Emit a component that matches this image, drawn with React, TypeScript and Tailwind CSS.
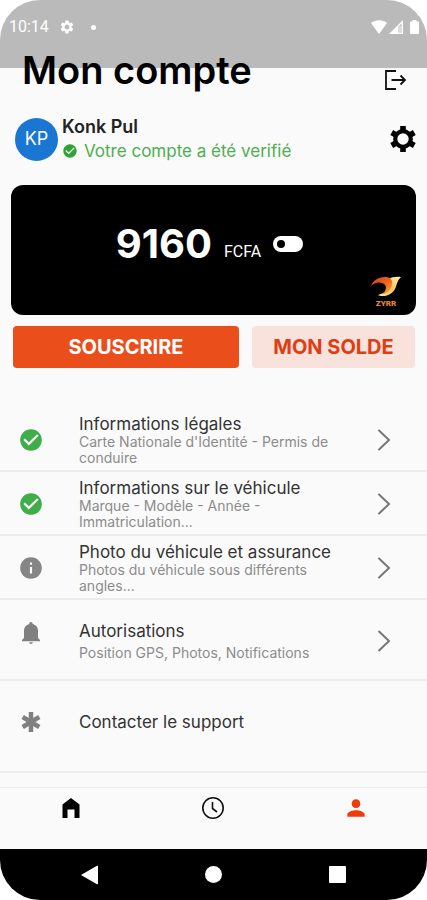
import type { ReactNode } from "react";
import { MdCheckCircle, MdInfo, MdPerson, MdSettings } from "react-icons/md";

type Item = {
  title: string;
  detail?: string;
  icon: ReactNode;
};

// rows with a two line description
const documents: Item[] = [
  {
    title: "Informations légales",
    detail: "Carte Nationale d'Identité - Permis de conduire",
    icon: <MdCheckCircle className="size-[26px] text-[#3fae49]" />,
  },
  {
    title: "Informations sur le véhicule",
    detail: "Marque - Modèle - Année - Immatriculation...",
    icon: <MdCheckCircle className="size-[26px] text-[#3fae49]" />,
  },
  {
    title: "Photo du véhicule et assurance",
    detail: "Photos du véhicule sous différents angles...",
    icon: <MdInfo className="size-[26px] text-[#858585]" />,
  },
];

function Chevron() {
  return (
    <svg viewBox="0 0 14 24" className="h-6 w-[14px] shrink-0" fill="none" stroke="#777" strokeWidth="2">
      <path d="M1.5 2 12 12 1.5 22" />
    </svg>
  );
}

function BellIcon() {
  return (
    <svg viewBox="0 0 26 26" className="mb-4 size-[26px]" fill="#808080">
      <path d="M13 2q1.700 0 1.700 1.900C18 4.700 20 7.200 20 10.500V18l2 2v1.200H4V20l2-2v-7.500C6 7.200 8 4.700 11.300 3.900 11.300 2.800 11.300 2 13 2Z" />
      <path d="M11 22.200h4q-.5 1.800-2 1.800t-2-1.800Z" />
    </svg>
  );
}

function AsteriskIcon() {
  return (
    <svg viewBox="0 0 26 26" className="size-[26px]" stroke="#808080" strokeWidth="4.500">
      <path d="M13 3v20M4.700 8l16.600 10M21.300 8 4.700 18" />
    </svg>
  );
}

function GearIcon() {
  return (
    <svg viewBox="0 0 30 30" className="size-[30px]" fill="none" stroke="#000">
      <circle cx="15" cy="15" r="7.800" strokeWidth="4.200" />
      <path
        d="M15 2v5M15 23v5M3.700 8.500l4.300 2.500M22 19l4.300 2.500M26.300 8.500 22 11M8 19l-4.300 2.500"
        strokeWidth="5.600"
      />
    </svg>
  );
}

function StatusBar() {
  return (
    <header className="flex h-[68px] items-start justify-between bg-[#bababa] pt-[17px] pr-2 pl-[9px] text-white">
      <div className="flex h-5 items-center">
        <span className="font-[Roboto] text-base leading-5">10:14</span>
        <MdSettings className="ml-[10px] size-4" />
        <span className="ml-4 size-[5px] rounded-full bg-white" />
      </div>
      <div className="flex h-5 items-center">
        <svg viewBox="0 0 16 14" className="h-[14px] w-4" fill="currentColor">
          <path d="M0 3C4.500-.8 11.500-.8 16 3L8 14Z" />
        </svg>
        <svg viewBox="0 0 15 14" className="ml-[2px] h-[14px] w-[15px]">
          <path d="M0 14 14 0v14Z" fill="#fff" />
          <path d="M9.500 6.500 12.500 3.500V12.500H9.500Z" fill="#bababa" />
          <path d="M11 6V12.500" stroke="#fff" strokeWidth="1" />
        </svg>
        <svg viewBox="0 0 9 14" className="ml-[6px] h-[14px] w-[9px]" fill="currentColor">
          <path d="M2.500 0h4v1.500H8q1 0 1 1V13q0 1-1 1H1q-1 0-1-1V2.500q0-1 1-1h1.500Z" />
        </svg>
      </div>
    </header>
  );
}

function BrandLogo() {
  return (
    <svg viewBox="0 0 32 32" className="absolute right-[14px] bottom-2 h-8 w-8" aria-label="ZYRR">
      <defs>
        <linearGradient id="wing" x1="0" y1="0" x2="1" y2="1">
          <stop offset="0" stopColor="#c63a1c" />
          <stop offset="0.55" stopColor="#f2691f" />
          <stop offset="1" stopColor="#ffb52e" />
        </linearGradient>
        <linearGradient id="tail" x1="1" y1="0" x2="0" y2="1">
          <stop offset="0" stopColor="#fff3b8" />
          <stop offset="0.5" stopColor="#f6c75a" />
          <stop offset="1" stopColor="#fff0a0" />
        </linearGradient>
      </defs>
      <path d="M31 2C25 1.500 21 2.500 19 4C24 8 20 17 8 20C12 22.500 22 21 25.500 13C27 9 27.500 5 31 2Z" fill="url(#tail)" />
      <path d="M1 11C4 3 14 0 20.500 3.500C25 8 21 17 12 20C16.500 15 17.500 10.500 13 8.500C9 6.500 4 8 1 11Z" fill="url(#wing)" />
      <text x="16" y="31" textAnchor="middle" fill="#e8852a" className="font-[Roboto] text-[8px] font-black">
        ZYRR
      </text>
    </svg>
  );
}

export default function App() {
  return (
    <div className="min-h-screen bg-white font-[Inter,sans-serif]">
      <div className="flex min-h-screen flex-col overflow-hidden rounded-[40px] bg-[#fafafa]">
        <StatusBar />

        <main>
          <div className="relative -mt-5 flex items-center justify-between pr-5 pl-[22px]">
            <h1 className="text-[38px] leading-[44px] font-semibold text-black">Mon compte</h1>
            <button type="button" aria-label="Se déconnecter" className="mt-5">
              <svg viewBox="0 0 24 24" className="size-6" fill="none" stroke="#111" strokeWidth="1.800">
                <path d="M13 3H3v18h10" />
                <path d="M8.500 12H22M17.500 7.500 22 12l-4.500 4.500" />
              </svg>
            </button>
          </div>

          {/* user */}
          <div className="mt-[23px] flex items-center pr-[9px] pl-[15px]">
            <div className="flex size-[43px] shrink-0 items-center justify-center rounded-full bg-[#1976d2] text-lg text-white">
              KP
            </div>
            <div className="ml-1 flex-1">
              <p className="text-lg leading-6 font-semibold text-[#222]">Konk Pul</p>
              <p className="flex items-center gap-[6px] text-[17px] leading-6 text-[#4caf50]">
                <MdCheckCircle className="size-4 text-[#2fa336]" />
                Votre compte a été verifié
              </p>
            </div>
            <button type="button" aria-label="Paramètres">
              <GearIcon />
            </button>
          </div>

          {/* balance */}
          <section className="relative mx-[11px] mt-[22px] flex h-[130px] items-center justify-center rounded-xl bg-black pr-2 pb-3 text-white">
            <span className="text-[40px] leading-10 font-bold">9160</span>
            <span className="mt-4 ml-3 font-[Roboto] text-base">FCFA</span>
            <input
              type="checkbox"
              aria-label="Masquer le solde"
              className="ml-3 h-4 w-[30px] appearance-none rounded-full bg-white before:m-1 before:block before:size-2 before:rounded-full before:bg-black checked:before:ml-[18px]"
            />
            <BrandLogo />
          </section>

          <div className="mt-[11px] flex gap-[13px] pr-3 pl-[13px]">
            <button type="button" className="h-[42px] flex-[226] rounded bg-[#e94e1b] text-xl font-bold text-white">
              SOUSCRIRE
            </button>
            <button type="button" className="h-[42px] flex-[163] rounded bg-[#f9e2db] text-xl font-bold text-[#df3d14]">
              MON SOLDE
            </button>
          </div>

          {/* menu */}
          <ul className="mt-10">
            {documents.map((item) => (
              <li key={item.title} className="border-b-2 border-[#ececec]">
                <button type="button" className="flex w-full items-center pt-[6px] pr-9 pb-1 pl-[18px] text-left">
                  {item.icon}
                  <span className="ml-[35px] w-[263px]">
                    <span className="block text-[17px] leading-5 text-[#333]">{item.title}</span>
                    <span className="block text-sm leading-4 text-[#8c8c8c]">{item.detail}</span>
                  </span>
                  <span className="ml-auto">
                    <Chevron />
                  </span>
                </button>
              </li>
            ))}
            <li className="border-b-2 border-[#ececec]">
              <button type="button" className="flex h-[79px] w-full items-center pt-[2px] pr-9 pl-[18px] text-left">
                <BellIcon />
                <span className="ml-[35px]">
                  <span className="block text-[17px] leading-6 text-[#333]">Autorisations</span>
                  <span className="block text-sm leading-5 text-[#8c8c8c]">Position GPS, Photos, Notifications</span>
                </span>
                <span className="ml-auto">
                  <Chevron />
                </span>
              </button>
            </li>
            <li className="border-b-2 border-[#ececec]">
              <button type="button" className="flex h-[90px] w-full items-center pr-9 pb-2 pl-[18px] text-left">
                <AsteriskIcon />
                <span className="ml-[35px] text-[17px] leading-6 text-[#333]">Contacter le support</span>
              </button>
            </li>
          </ul>
        </main>

        <nav className="mt-auto grid h-[62px] grid-cols-3 justify-items-center border-t border-[#ededed] pt-2">
          <a href="#accueil" aria-label="Accueil" className="flex h-6 items-center">
            <svg viewBox="0 0 18 20" className="h-5 w-[18px]" fill="#000">
              <path d="M9 0 17.500 6.500V20H12.500V11.500H5.500V20H.5V6.500Z" />
            </svg>
          </a>
          <a href="#historique" aria-label="Historique" className="flex h-6 items-center">
            <svg viewBox="0 0 24 24" className="size-6" fill="none" stroke="#111" strokeWidth="1.600">
              <circle cx="12" cy="12" r="10.200" />
              <path d="M11.500 6v6.500l4.500 3.500" />
            </svg>
          </a>
          <a href="#compte" aria-label="Compte" className="flex h-6 items-center">
            <MdPerson className="size-[26px] text-[#f03a0a]" />
          </a>
        </nav>

        <footer className="grid h-[51px] grid-cols-3 place-items-center bg-black px-7">
          <button type="button" aria-label="Retour">
            <svg viewBox="0 0 18 20" className="h-5 w-[18px]" fill="#fff">
              <path d="M0 10 16 .8q1-.5 1 .6v17.200q0 1.100-1 .6Z" />
            </svg>
          </button>
          <button type="button" aria-label="Écran d'accueil" className="size-[17px] rounded-full bg-white" />
          <button type="button" aria-label="Applications récentes" className="size-[17px] rounded-[1px] bg-white" />
        </footer>
      </div>
    </div>
  );
}
